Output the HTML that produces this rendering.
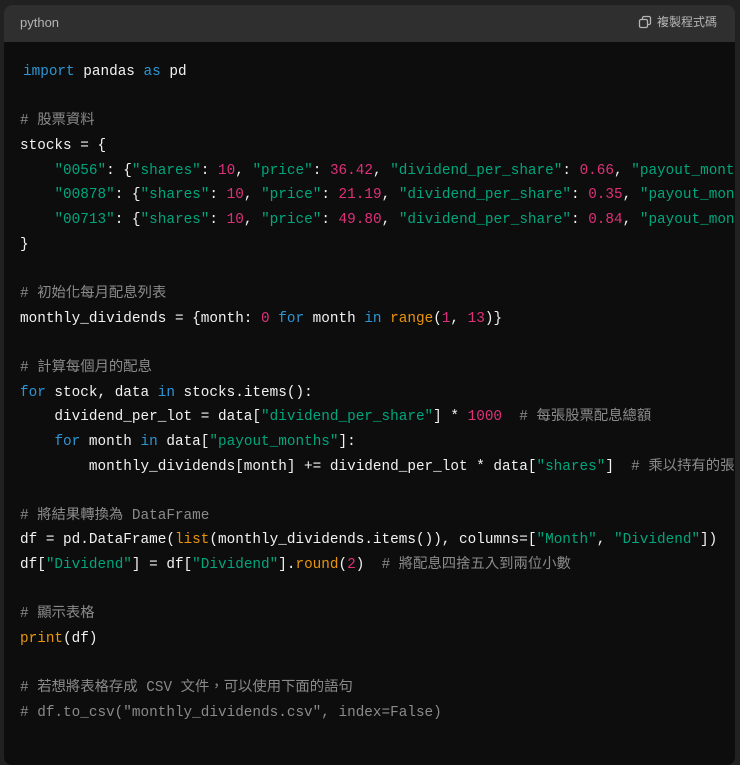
<!DOCTYPE html>
<html><head><meta charset="utf-8"><style>
html,body{margin:0;padding:0;background:#212121;width:740px;height:742px;overflow:hidden}
.card{position:absolute;left:4px;top:5px;width:731px;height:760px;border-radius:8px;overflow:hidden;background:#0d0d0d}
.hd{height:37px;background:#2f2f2f;color:#b4b4b4;font:13px "Liberation Sans","Noto Sans CJK TC",sans-serif;position:relative}
.hd .l{position:absolute;left:16px;top:10px}
.hd .r{position:absolute;right:18px;top:8px;display:flex;align-items:center;gap:5px;font-size:12px}
pre{margin:0;padding:18px 0 0 16px;font:14.35px/24.65px "Liberation Mono","Noto Sans CJK TC",monospace;color:#f2f2f2;white-space:pre}
.k{color:#2e95d3}.s{color:#00a67d}.n{color:#df3079}.b{color:#e9950c}.c{color:#8a8a8a}
</style></head><body>
<div class="card">
<div class="hd"><span class="l">python</span><span class="r"><svg width="14" height="14" viewBox="0 0 14 14" fill="none" stroke="#b4b4b4" stroke-width="1.3"><rect x="1.5" y="4.5" width="8" height="8" rx="1.5"/><path d="M4.5 4.5V3a1.5 1.5 0 0 1 1.5-1.5h5A1.5 1.5 0 0 1 12.5 3v5A1.5 1.5 0 0 1 11 9.5H9.5"/></svg>複製程式碼</span></div>
<pre><span style="padding-left:3px"></span><span class="k">import</span> pandas <span class="k">as</span> pd

<span class="c"># 股票資料</span>
stocks = {
    <span class="s">"0056"</span>: {<span class="s">"shares"</span>: <span class="n">10</span>, <span class="s">"price"</span>: <span class="n">36.42</span>, <span class="s">"dividend_per_share"</span>: <span class="n">0.66</span>, <span class="s">"payout_months"</span>
    <span class="s">"00878"</span>: {<span class="s">"shares"</span>: <span class="n">10</span>, <span class="s">"price"</span>: <span class="n">21.19</span>, <span class="s">"dividend_per_share"</span>: <span class="n">0.35</span>, <span class="s">"payout_months"</span>
    <span class="s">"00713"</span>: {<span class="s">"shares"</span>: <span class="n">10</span>, <span class="s">"price"</span>: <span class="n">49.80</span>, <span class="s">"dividend_per_share"</span>: <span class="n">0.84</span>, <span class="s">"payout_months"</span>
}

<span class="c"># 初始化每月配息列表</span>
monthly_dividends = {month: <span class="n">0</span> <span class="k">for</span> month <span class="k">in</span> <span class="b">range</span>(<span class="n">1</span>, <span class="n">13</span>)}

<span class="c"># 計算每個月的配息</span>
<span class="k">for</span> stock, data <span class="k">in</span> stocks.items():
    dividend_per_lot = data[<span class="s">"dividend_per_share"</span>] * <span class="n">1000</span>  <span class="c"># 每張股票配息總額</span>
    <span class="k">for</span> month <span class="k">in</span> data[<span class="s">"payout_months"</span>]:
        monthly_dividends[month] += dividend_per_lot * data[<span class="s">"shares"</span>]  <span class="c"># 乘以持有的張數</span>

<span class="c"># 將結果轉換為 DataFrame</span>
df = pd.DataFrame(<span class="b">list</span>(monthly_dividends.items()), columns=[<span class="s">"Month"</span>, <span class="s">"Dividend"</span>])
df[<span class="s">"Dividend"</span>] = df[<span class="s">"Dividend"</span>].<span class="b">round</span>(<span class="n">2</span>)  <span class="c"># 將配息四捨五入到兩位小數</span>

<span class="c"># 顯示表格</span>
<span class="b">print</span>(df)

<span class="c"># 若想將表格存成 CSV 文件，可以使用下面的語句</span>
<span class="c"># df.to_csv("monthly_dividends.csv", index=False)</span>
</pre>
</div>
</body></html>
